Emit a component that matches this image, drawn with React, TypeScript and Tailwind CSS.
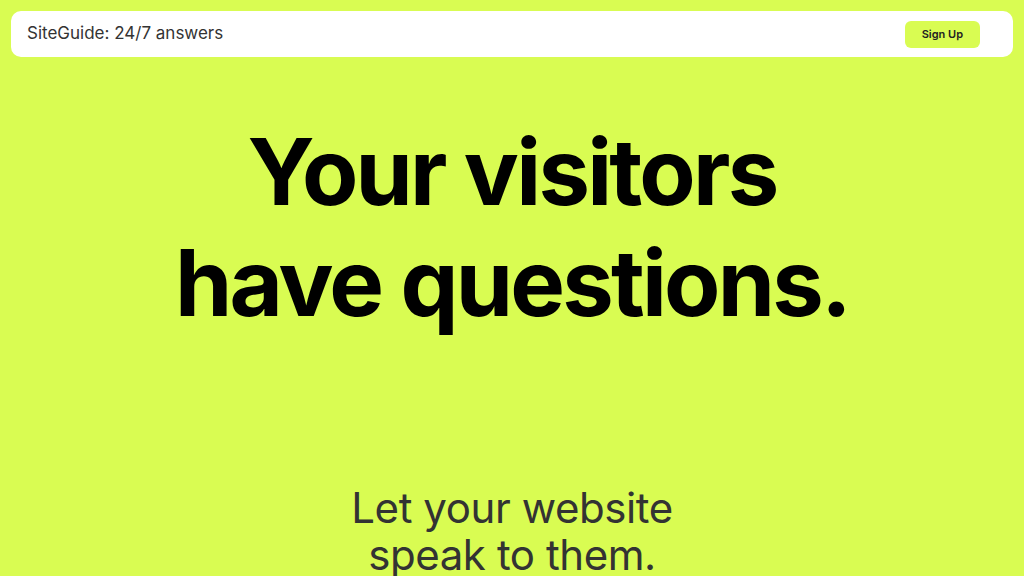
export default function App() {
  return (
    <div
      className="min-h-screen bg-[#d9fc52] px-[11px] pt-[11px]"
      style={{ fontFamily: "Inter, 'Noto Sans', sans-serif" }}
    >
      <header className="flex h-[46px] items-center justify-between rounded-[10px] bg-white pl-[16px] pr-[33px]">
        <span className="text-[17px] text-[#333333]">SiteGuide: 24/7 answers</span>
        <button className="h-[27px] rounded-[6px] bg-[#d9fc52] px-[17px] text-[11px] font-semibold text-[#222222]">
          Sign Up
        </button>
      </header>

      <main className="flex flex-col items-center">
        <h1 className="mt-[59px] text-center text-[92px] font-bold leading-[111px] tracking-[-0.03em] text-black">
          Your visitors
          <br />
          have questions.
        </h1>
        <p className="mt-[146px] text-center text-[42px] leading-[47px] tracking-[-0.01em] text-[#333333]">
          Let your website
          <br />
          speak to them.
        </p>
      </main>
    </div>
  );
}
